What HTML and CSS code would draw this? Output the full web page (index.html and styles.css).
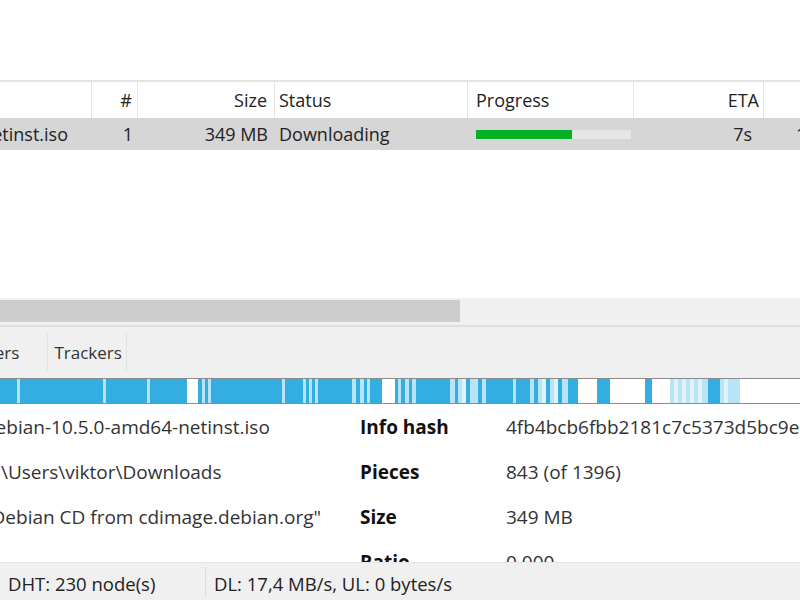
FILE: index.html
```html
<!DOCTYPE html>
<html>

<head>
    <meta name="viewport" content="width=device-width, initial-scale=1">
    <link rel="stylesheet" href="styles.css">
</head>

<body>

    <div class="toolbar-space"></div>

    <div class="transfers">
        <div class="row header-row">
            <div class="cell col-name"></div>
            <div class="cell col-num">#</div>
            <div class="cell col-size">Size</div>
            <div class="cell col-status">Status</div>
            <div class="cell col-progress">Progress</div>
            <div class="cell col-eta">ETA</div>
            <div class="cell col-seeds">Seeds</div>
        </div>
        <div class="row torrent-row">
            <div class="cell col-name">debian-10.5.0-amd64-netinst.iso</div>
            <div class="cell col-num">1</div>
            <div class="cell col-size">349 MB</div>
            <div class="cell col-status">Downloading</div>
            <div class="cell col-progress">
                <div class="progress"><div class="progress-fill" style="width: 62%"></div></div>
            </div>
            <div class="cell col-eta">7s</div>
            <div class="cell col-seeds">1 (12)</div>
        </div>
    </div>

    <div class="hscroll">
        <div class="hscroll-thumb"></div>
    </div>

    <div class="tabs">
        <div class="tab tab-cut">Peers</div>
        <div class="tab tab-trackers">Trackers</div>
    </div>

    <div class="pieces" id="pieces"></div>

    <div class="details">
        <div class="detail-row">
            <div class="detail-value">debian-10.5.0-amd64-netinst.iso</div>
            <div class="detail-label">Info hash</div>
            <div class="detail-value2">4fb4bcb6fbb2181c7c5373d5bc9e0b62b53dc80f</div>
        </div>
        <div class="detail-row">
            <div class="detail-value">C:\Users\viktor\Downloads</div>
            <div class="detail-label">Pieces</div>
            <div class="detail-value2">843 (of 1396)</div>
        </div>
        <div class="detail-row">
            <div class="detail-value">"Debian CD from cdimage.debian.org"</div>
            <div class="detail-label">Size</div>
            <div class="detail-value2">349 MB</div>
        </div>
        <div class="detail-row">
            <div class="detail-value">-</div>
            <div class="detail-label">Ratio</div>
            <div class="detail-value2">0.000</div>
        </div>
    </div>

    <div class="statusbar">
        <div class="status-item status-dht">DHT: 230 node(s)</div>
        <div class="status-item">DL: 17,4 MB/s, UL: 0 bytes/s</div>
    </div>

    <script>
        // Piece map: [start, end, kind] in pixels, b = have, l = partial, p = requested, w = missing
        let pieces = [
            [0, 17, "b"], [17, 20, "l"], [20, 103, "b"], [103, 106, "l"], [106, 147, "b"], [147, 150, "l"],
            [150, 187, "b"], [187, 198, "w"], [198, 202, "b"], [202, 205, "l"], [205, 208, "b"], [208, 211, "l"],
            [211, 282, "b"], [282, 285, "l"], [285, 303, "b"], [303, 306, "l"], [306, 309, "b"], [309, 312, "l"],
            [312, 315, "b"], [315, 318, "l"], [318, 352, "b"], [352, 356, "l"], [356, 360, "b"], [360, 364, "l"],
            [364, 367, "b"], [367, 370, "l"], [370, 382, "b"], [382, 395, "w"], [395, 398, "b"], [398, 401, "l"],
            [401, 405, "b"], [405, 409, "l"], [409, 412, "b"], [412, 416, "l"], [416, 450, "b"], [450, 455, "l"],
            [455, 458, "b"], [458, 462, "l"], [462, 466, "p"], [466, 470, "b"], [470, 478, "l"], [478, 482, "b"],
            [482, 486, "l"], [486, 513, "b"], [513, 516, "l"], [516, 530, "b"], [530, 534, "l"], [534, 538, "b"],
            [538, 542, "l"], [542, 546, "p"], [546, 550, "b"], [550, 554, "l"], [554, 558, "p"], [558, 562, "b"],
            [562, 568, "l"], [568, 578, "b"], [578, 597, "w"], [597, 610, "b"], [610, 645, "w"], [645, 652, "b"],
            [652, 670, "w"], [670, 674, "l"], [674, 678, "p"], [678, 682, "l"], [682, 686, "p"], [686, 690, "l"],
            [690, 694, "p"], [694, 698, "l"], [698, 702, "p"], [702, 708, "l"], [708, 720, "b"], [720, 724, "l"],
            [724, 728, "p"], [728, 740, "l"], [740, 800, "w"]
        ];

        let bar = document.getElementById("pieces");

        for (let i = 0; i < pieces.length; i++) {
            let seg = document.createElement("div");
            seg.className = "piece piece-" + pieces[i][2];
            seg.style.width = (pieces[i][1] - pieces[i][0]) + "px";
            bar.appendChild(seg);
        }
    </script>

</body>

</html>
```

FILE: styles.css
```css
html,
body {
    margin: 0;
    padding: 0;
    width: 800px;
    height: 600px;
    overflow: hidden;
    background-color: #fff;
    font-family: "Open Sans", "Noto Sans", sans-serif;
    font-size: 18px;
    color: #222;
}

.toolbar-space {
    height: 80px;
}

/* Transfer list */

.transfers {
    border-top: 2px solid #e4e4e4;
    height: 216px;
}

.row {
    display: flex;
    white-space: nowrap;
}

.header-row {
    height: 36px;
}

.header-row .cell {
    border-right: 1px solid #e6e6e6;
}

.torrent-row {
    height: 32px;
    background-color: #d6d6d6;
}

.cell {
    display: flex;
    align-items: center;
    box-sizing: border-box;
    overflow: hidden;
    flex-shrink: 0;
}

.col-name {
    width: 92px;
    justify-content: flex-end;
    padding-right: 24px;
}

.col-num {
    width: 46px;
    justify-content: flex-end;
    padding-right: 5px;
}

.col-size {
    width: 137px;
    justify-content: flex-end;
    padding-right: 7px;
}

.col-status {
    width: 193px;
    padding-left: 4px;
}

.col-progress {
    width: 166px;
    padding-left: 8px;
}

.col-eta {
    width: 130px;
    justify-content: flex-end;
    padding-right: 4px;
}

.torrent-row .col-eta {
    padding-right: 12px;
}

.col-seeds {
    width: 200px;
    padding-left: 40px;
}

.torrent-row .col-seeds {
    padding-left: 32px;
}

.progress {
    width: 155px;
    height: 9px;
    background-color: #e6e6e6;
}

.progress-fill {
    height: 100%;
    background-color: #06b025;
}

/* Horizontal scrollbar */

.hscroll {
    height: 29px;
    background-color: #f0f0f0;
    border-bottom: 2px solid #dedede;
    box-sizing: border-box;
    padding: 2px 0 3px 0;
}

.hscroll-thumb {
    width: 460px;
    height: 100%;
    background-color: #cdcdcd;
}

/* Tabs */

.tabs {
    display: flex;
    height: 51px;
    background-color: #f0f0f0;
    padding-top: 6px;
    padding-bottom: 7px;
    box-sizing: border-box;
}

.tab {
    display: flex;
    align-items: center;
    border-right: 1px solid #e2e2e2;
    font-size: 17px;
    color: #333;
}

.tab-cut {
    margin-left: -25px;
    padding-right: 28px;
}

.tab-trackers {
    padding-left: 6px;
    padding-right: 4px;
}

/* Piece bar */

.pieces {
    display: flex;
    height: 24px;
    border-top: 1px solid #8c8c8c;
    border-bottom: 1px solid #8c8c8c;
    background-color: #fff;
}

.piece {
    height: 100%;
    flex-shrink: 0;
}

.piece-b {
    background-color: #33aee1;
}

.piece-l {
    background-color: #b9e3f6;
}

.piece-p {
    background-color: #e0f3fb;
}

.piece-w {
    background-color: #fff;
}

/* General info */

.details {
    height: 158px;
    overflow: hidden;
    box-sizing: border-box;
}

.detail-row {
    display: flex;
    height: 45px;
    align-items: center;
    white-space: nowrap;
    font-size: 19px;
    color: #333;
}

.detail-value {
    width: 376px;
    margin-left: -16px;
    flex-shrink: 0;
}

.detail-label {
    width: 146px;
    flex-shrink: 0;
    font-weight: bold;
    color: #111;
}

.detail-value2 {
    flex-shrink: 0;
}

/* Status bar */

.statusbar {
    display: flex;
    height: 37px;
    background-color: #f0f0f0;
    border-top: 1px solid #e6e6e6;
    align-items: center;
    font-size: 18.5px;
    color: #222;
}

.status-item {
    padding: 4px 8px 0 8px;
}

.status-dht {
    width: 197px;
    border-right: 1px solid #dadada;
    padding-right: 0;
}
```
